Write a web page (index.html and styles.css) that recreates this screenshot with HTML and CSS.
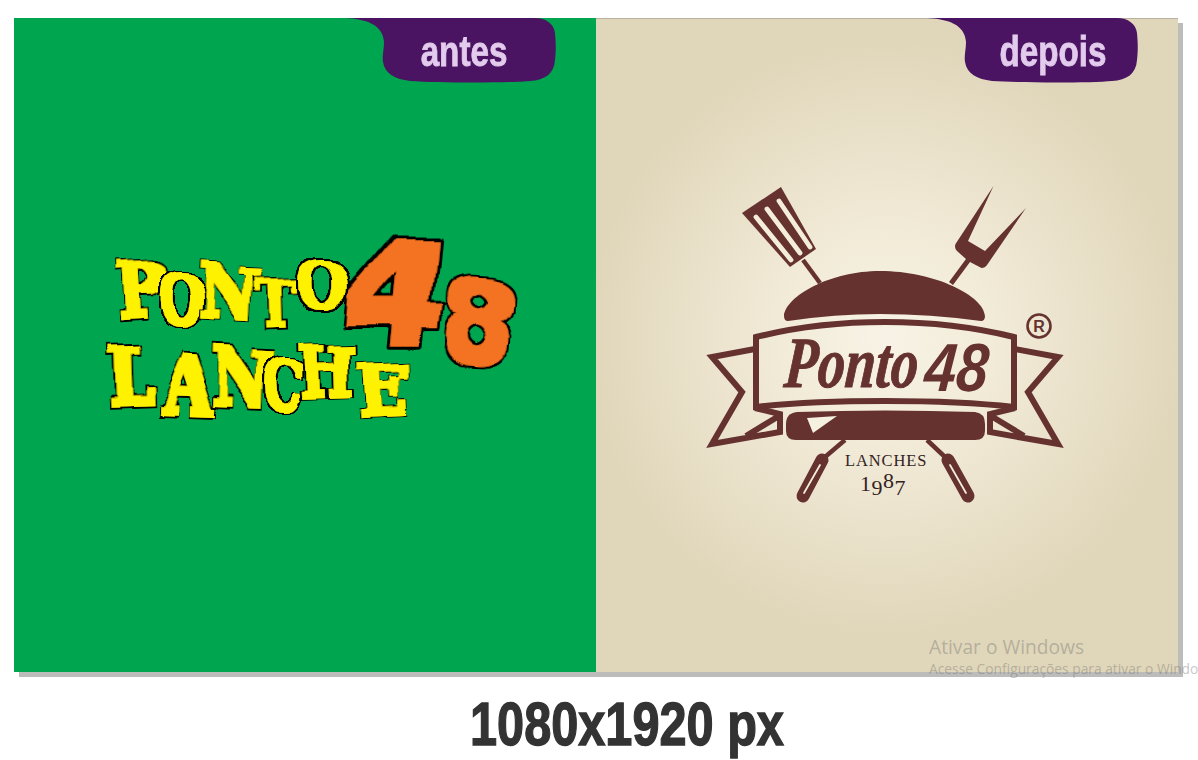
FILE: index.html
```html
<!DOCTYPE html>
<html lang="pt-BR">
<head>
<meta charset="utf-8">
<title>Ponto 48 Lanches</title>
<link rel="stylesheet" href="styles.css">
</head>
<body>
<main class="page">
  <section class="board">
    <article class="panel panel-before">
      <svg class="art" viewBox="14 18 582 654" aria-label="Logo antigo">
        <defs>
          <filter id="puffy" x="-35%" y="-35%" width="170%" height="170%">
            <feTurbulence type="fractalNoise" baseFrequency="0.02" numOctaves="1" seed="11" result="noise"/>
            <feMorphology in="SourceGraphic" operator="dilate" radius="1.6" result="fat"/>
            <feMorphology in="SourceAlpha" operator="dilate" radius="3.4"/>
            <feGaussianBlur stdDeviation=".7"/>
            <feComponentTransfer result="edge"><feFuncA type="linear" slope="5" intercept="-1.8"/></feComponentTransfer>
            <feMerge result="stack">
              <feMergeNode in="edge"/>
              <feMergeNode in="fat"/>
            </feMerge>
            <feDisplacementMap in="stack" in2="noise" scale="16" xChannelSelector="R" yChannelSelector="G"/>
          </filter>
        </defs>
        <text class="old-num" transform="translate(390 343) scale(1.85 1.62) skewX(-5)">4</text>
        <text class="old-num" transform="translate(476 362) scale(1.3 1.3) rotate(3)">8</text>
        <g class="old-word">
          <text transform="translate(142 316) scale(.95 1.05) rotate(-3)">P</text>
          <text transform="translate(182 324) scale(.8 .95)">O</text>
          <text transform="translate(227 317) scale(.95 1) rotate(3)">N</text>
          <text transform="translate(276 326) scale(.78 .92) rotate(-2)">T</text>
          <text transform="translate(322 308) scale(.9 .9)">O</text>
          <text transform="translate(133 404) scale(1.05 1.1) rotate(-2)">L</text>
          <text transform="translate(188 414) scale(1 1.15) rotate(2)">A</text>
          <text transform="translate(240 405) scale(.95 1.1) rotate(2)">N</text>
          <text transform="translate(283 410) scale(.75 1)">C</text>
          <text transform="translate(327 396) scale(.9 .95) rotate(-2)">H</text>
          <text transform="translate(384 414) scale(1 .95) rotate(-3)">E</text>
        </g>
      </svg>
      <div class="tab"><span class="tab-label tab-label-before">antes</span></div>
    </article>
    <article class="panel panel-after">
      <svg class="art" viewBox="596 18 582 654" aria-label="Logo novo">
        <g class="brand">
          <!-- espátula -->
          <path d="M742 213 781 187 816 249 790 267Z"/>
          <path class="brand-line thin" d="M803 260 820 283"/>
          <!-- garfo -->
          <path d="M993.5 186 955.5 244Q954 248 957 251L966 259 949 282 953 285 970 262 981.500 268Q985 268 987 265L1026 208 985 251 968 241Z"/>
          <path class="brand-hole" d="M756 217 791 260M767 209 800 253M779 201 810 247"/>
          <!-- pão -->
          <path d="M784 316C786 296 830 271 880 271 935 271 984 296 985 316Q985 321 981 321 930 314 880 314 835 314 788 321 784 321 784 316Z"/>
          <!-- fita -->
          <path class="brand-line" d="M756 337C800 326 840 322 885 322 930 322 970 326 1014 337V407C970 402 930 401 885 401 840 401 800 402 756 407Z"/>
          <path class="brand-line tail" d="M755 349 712 357 742 392 712 444 780 432V414L755 408M779 416 746 436"/>
          <path class="brand-line tail" d="M1015 349 1058 357 1028 392 1058 444 990 432V414L1015 408M991 416 1024 436"/>
          <!-- recheio -->
          <path d="M786 424Q786 413 797 412 885 409 975 412 985 413 985 424V431Q985 440 975 440H796Q786 440 786 431Z"/>
          <path class="brand-cut" d="M807 418 837 416 813 433Z"/>
          <!-- cabos -->
          <path class="brand-line thin" d="M845 440 825 457M927 440 945 457"/>
          <path class="brand-line handle" d="M822 460 803 496M948 460 968 496"/>
          <path class="brand-hole fine" d="M820 465 804 493M950 465 966 493"/>
          <!-- registrado -->
          <circle class="brand-line reg" cx="1039" cy="326" r="11.500"/>
          <text class="reg-letter" x="1039" y="332">R</text>
          <!-- nome -->
          <text class="brand-script" transform="translate(783 387) scale(.76 1) skewX(-6)">Ponto</text>
          <text class="brand-num" transform="translate(923 391) scale(.84 1) skewX(-6)">48</text>
          <text class="brand-sub" x="845" y="466">LANCHES</text>
          <text class="brand-year" x="860" y="491">1<tspan dy="4">9</tspan><tspan dy="-7">8</tspan><tspan dy="7">7</tspan></text>
        </g>
      </svg>
      <div class="tab"><span class="tab-label tab-label-after">depois</span></div>
      <div class="activation">
        <p class="activation-title">Ativar o Windows</p>
        <p class="activation-text">Acesse Configurações para ativar o Windows.</p>
      </div>
    </article>
  </section>
  <h1 class="caption"><span class="caption-text">1080x1920 px</span></h1>
</main>
</body>
</html>
```
FILE: styles.css
```css
* { box-sizing: border-box; }
html, body {
  margin: 0;
  height: 100%;
  overflow: hidden;
  background: #fff;
}
.page {
  display: flex;
  flex-direction: column;
  width: 1198px;
  height: 760px;
  padding: 18px 0 0 14px;
}
.board {
  display: grid;
  grid-template-columns: 582px 582px;
  width: 1164px;
  height: 654px;
  box-shadow: 5px 5px 0 #bcbcba;
}
.panel {
  position: relative;
  height: 654px;
}
.panel-before { background: #00a54f; }
.panel-after {
  background: radial-gradient(circle 300px at 50% 49%, #f8f3e6 0, #f2ebd8 35%, #e0d6ba 100%) #e0d6ba;
  box-shadow: inset 0 1px 0 #b9b2a0;
}
.art {
  display: block;
  width: 582px;
  height: 654px;
}
.tab {
  position: absolute;
  top: 0;
  right: 39px;
  width: 212px;
  height: 65px;
  display: flex;
  justify-content: flex-end;
  background: #4a1462;
  clip-path: path("M0 0C20 1 38 6 39 24 39 32 37 37 38 44 40 56 50 61 65 63 95 65 165 65 185 63 200 62 209 56 210 42 211 32 211 27 210 15 209 6 201 0 190 0Z");
}
.tab-label {
  width: 160px;
  padding-top: 11px;
  text-align: center;
  font: 700 42px/46px "Liberation Sans", sans-serif;
  color: #e2cbec;
  transform: scaleX(.79);
  -webkit-text-stroke: .8px #e2cbec;
}
.tab-label-before { margin-right: 13px; }
.tab-label-after { margin-right: 6px; }
.activation {
  position: absolute;
  left: 333px;
  top: 618px;
  width: 300px;
  color: rgba(110, 110, 110, .4);
  font-family: "Open Sans", sans-serif;
  white-space: nowrap;
}
.activation-title {
  margin: 0;
  font-size: 19.200px;
  line-height: 22px;
}
.activation-text {
  margin: 0;
  font-size: 13.800px;
  line-height: 22px;
}
.caption {
  margin: 17px 0 0;
  padding-left: 42px;
  width: 1184px;
  text-align: center;
  font: 700 62px/70px "Liberation Sans", sans-serif;
  color: #333;
}
.caption-text {
  display: inline-block;
  transform: scaleX(.785);
  -webkit-text-stroke: 1.4px #333;
}

/* logo antigo */
.old-word text {
  font: 700 70px "DejaVu Serif", serif;
  text-anchor: middle;
  fill: #fff200;
  filter: url(#puffy);
}
.old-num {
  font: 700 86px "DejaVu Sans", sans-serif;
  text-anchor: middle;
  fill: #f47321;
  filter: url(#puffy);
}

/* logo novo */
.brand { fill: #653230; }
.brand-line {
  fill: none;
  stroke: #653230;
  stroke-width: 6;
}
.brand-line.tail { stroke-width: 6; stroke-linejoin: miter; }
.brand-line.thin { stroke-width: 4.500; }
.brand-line.handle { stroke-width: 13; stroke-linecap: round; }
.brand-line.reg { stroke-width: 2.600; }
.brand-hole {
  fill: none;
  stroke: #f3edda;
  stroke-width: 4.800;
  stroke-linecap: round;
}
.brand-hole.fine { stroke-width: 1.800; }
.brand-cut { fill: #f5f0e0; }
.reg-letter {
  font: 700 16px "Liberation Sans", sans-serif;
  text-anchor: middle;
}
.brand-script {
  font: italic 700 72px "Liberation Serif", serif;
  stroke: #653230;
  stroke-width: 1;
}
.brand-num {
  font: italic 700 68px "Liberation Sans", sans-serif;
}
.brand-sub {
  font: 400 16.500px "Liberation Serif", serif;
  fill: #33231f;
  letter-spacing: .9px;
}
.brand-year {
  font: 400 22px "Liberation Serif", serif;
  fill: #33231f;
  letter-spacing: .5px;
}
```
